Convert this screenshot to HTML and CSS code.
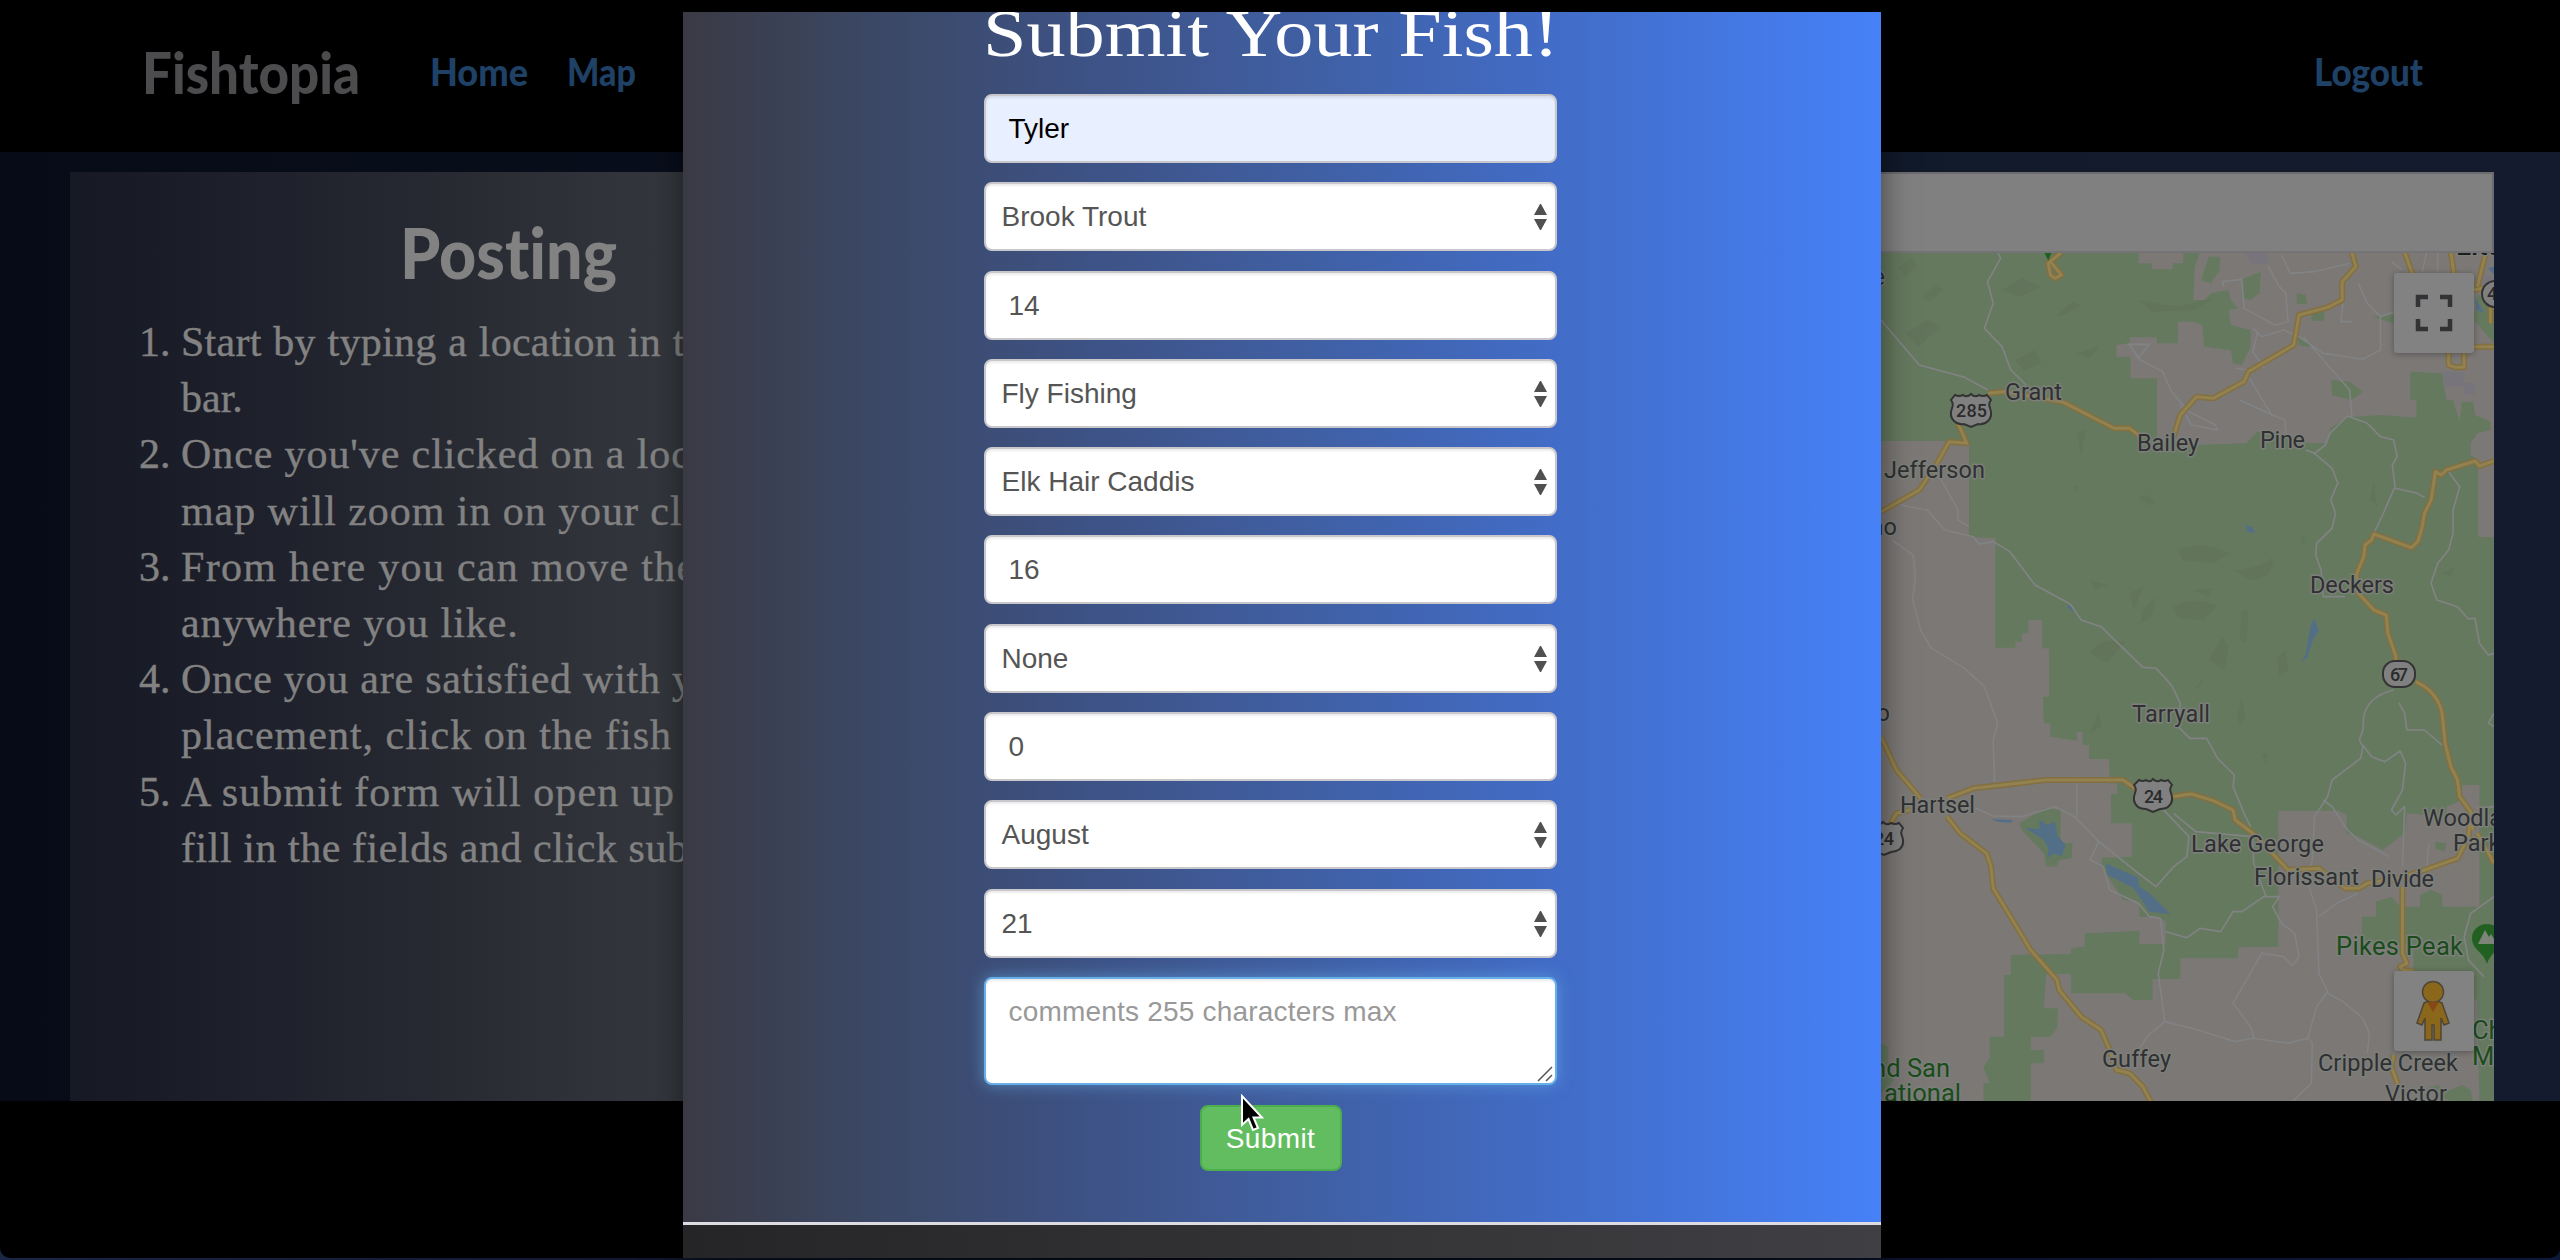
FILE: index.html
```html
<!DOCTYPE html>
<html lang="en">
<head>
<meta charset="utf-8">
<title>Fishtopia</title>
<link rel="stylesheet" href="styles.css">
</head>
<body>
<div class="window">
  <nav class="navbar">
    <svg class="brand" width="220" height="80"><text x="-1" y="55" textLength="218" lengthAdjust="spacingAndGlyphs">Fishtopia</text></svg>
    <div class="links">
      <svg width="100" height="60"><text x="-1" y="42" textLength="98" lengthAdjust="spacingAndGlyphs">Home</text></svg>
      <svg width="70" height="60"><text x="-1" y="42" textLength="69" lengthAdjust="spacingAndGlyphs">Map</text></svg>
    </div>
    <div class="links logout">
      <svg width="110" height="60"><text x="-1" y="42" textLength="109" lengthAdjust="spacingAndGlyphs">Logout</text></svg>
    </div>
  </nav>

  <main class="content">
    <section class="guide">
      <h2><svg width="220" height="100"><text x="0" y="67" textLength="217" lengthAdjust="spacingAndGlyphs">Posting</text></svg></h2>
      <ol>
        <li><span class="l1">Start by typing a location in the</span><br>bar.</li>
        <li><span class="l2">Once you've clicked on a location</span><br><span class="l3">map will zoom in on your click</span></li>
        <li><span class="l4">From here you can move the</span><br><span class="l5">anywhere you like.</span></li>
        <li><span class="l6">Once you are satisfied with your</span><br><span class="l7">placement, click on the fish</span></li>
        <li><span class="l8">A submit form will open up</span><br><span class="l9">fill in the fields and click submit</span></li>
      </ol>
    </section>

    <section class="finder">
      <div class="search"></div>
      <svg class="map" width="613" height="848" viewBox="1881 253 613 848">
        <defs>
          <g id="roads">
            <path d="M1095 757 1104 800 1073 845V900L1040 922 975 945 963 1035 860 1115 850 1145 780 1195 742 1190 705 1245 690 1310"/>
            <path d="M268 1180 305 1175 370 1190 440 1207 555 1285H590L620 1315M200 1270 220 1330 180 1325 150 1395 112 1470 25 1535"/>
            <path d="M435 757 405 790 410 825 420 835 435 825 410 785"/>
            <path d="M1215 757 1235 830M1320 757 1330 850M1400 757 1380 860M1370 870 1418 860M1370 1040H1418M1315 1060V1095L1330 1102H1350V1060M1410 900V970"/>
            <path d="M1418 1383 1385 1398 1375 1383 1310 1410 1298 1425 1285 1415 1275 1500 1260 1540 1255 1580 1245 1625 1230 1643 1145 1602 1140 1620 1125 1635 1122 1670 1105 1725 1110 1780 1145 1830 1173 1845 1177 1900 1195 1970V1990M1240 2045Q1290 2075 1300 2140L1307 2230 1320 2300 1335 2340 1340 2390 1365 2435 1370 2490"/>
            <path d="M25 2210 60 2310 115 2395M175 2395 235 2365 400 2340H575L605 2368M685 2390 730 2382 780 2402 825 2430 830 2460 875 2505 950 2610 1020 2605 1080 2665H1110L1130 2650 1200 2635 1260 2610 1335 2575 1360 2510 1365 2450M1380 2500 1418 2590M1210 2660V2860L1220 2890 1205 2900 1210 2910 1235 2913M1190 3165 1185 3200 1200 3255M45 2475 60 2440 90 2430"/>
            <path d="M175 2450 205 2500 265 2560 275 2600 280 2665 365 2850 425 2940 430 2970 480 3050 525 3090 545 3150 560 3210 590 3220 620 3260 640 3310"/>
          </g>
        </defs>
        <rect class="land" x="1881" y="253" width="613" height="848"/>
        <g transform="translate(1870 0) scale(.44005 .33333)">
          <g class="forest">
            <path d="M25 757H610V790H640V808H688V790H712V757H750L738 800 735 900 760 900 775 880 815 870 820 900 835 925 815 930 820 975 865 990V1040L845 1095 825 1090 820 1050 760 1040 755 975 735 965H700V1030H652V1012H590V1030L560 1035V1070H592V1135H652V1320L735 1335 855 1330 880 1295 1000 1330H1040L1045 1285 1085 1252 1165 1245 1242 1253V1200H1228V1115L1300 1120 1310 1200H1325L1340 1265 1345 1205H1370L1375 1245 1410 1265V1290L1380 1300 1365 1330V1365L1382 1380V1610L1418 1612V2720H1385V2355H1345V2400L1310 2420V2450L1220 2440 1215 2500 1165 2550 1110 2510 1083 2500V2445L1065 2432H928V2840L838 2842 835 2875H705V2937H642V3000H598L580 2980H457V2922H400L395 3025H427L425 3085 410 3110H365V3150H395V3190H365V3305H258V3250H272L258 3200 272 3175V3110H305V2925H320V2865L457 2862V2845L488 2840V2800L612 2793V2832H672V2765L655 2750H612V2705L575 2700 527 2600V2573L595 2570V2470H548V2382H562V2350H545L543 2277H498V2235H483V2195H470V2222L410 2210V2170H395L393 2090H407V1945H391V1860H360V1900H345V1925H330V1943H285V1615L225 1610V1323H25Z"/>
            <path d="M340 2470 395 2425 433 2430V2530H460L458 2575 430 2580 425 2600 400 2598 395 2560 345 2490ZM1118 2830V2750H1150V2705L1185 2690 1205 2720H1250V2685L1275 2670 1300 2685V2720H1418V3305H1385L1380 3000 1235 2920V2830ZM1265 3265 1290 3255 1310 3275 1345 3255 1365 3270 1370 3305H1320ZM770 770H795V810L775 850 752 840ZM845 838 888 815 885 880 865 900 845 895ZM970 880 990 885 993 912H970ZM1003 935H1032V962H1003ZM1142 950 1190 945V970ZM1048 1140 1090 1145 1120 1175 1095 1200 1050 1185ZM25 3130 42 3140 40 3180 55 3240 25 3280ZM1372 960 1418 1030V930L1380 880ZM970 1010 1000 1025 1003 1042 975 1035ZM1285 2525 1310 2530 1305 2555 1285 2545Z"/>
          </g>
          <g class="relief">
            <path d="M65 800 95 770 105 795 80 830ZM120 890 150 850 165 870 135 905ZM300 870 345 835 390 860 340 890ZM420 950 460 905 480 915 440 945ZM80 1000 130 960 160 980 110 1040ZM330 1080 375 1050 390 1090 350 1110ZM470 1060 520 1040 500 1075ZM610 900 700 920 780 895 740 930 640 935ZM830 1710Q900 1700 915 1670 920 1740 860 1740ZM700 1650Q750 1620 820 1660L780 1690 710 1680ZM610 1490 630 1485 650 1510 630 1515ZM500 1740 540 1755 510 1768ZM730 1770 780 1765 770 1790ZM690 1820Q730 1790 790 1815L760 1860 700 1855ZM845 1830 860 1830 855 1930 840 1920ZM500 1960Q520 1910 580 1925L540 1990ZM770 1980 800 1910 815 1940 805 2010ZM735 2070 760 2030 750 2060ZM835 2150 845 2090 852 2150 840 2180ZM500 2200 520 2130 525 2180ZM1135 1500 1145 1450 1152 1520ZM978 1630 985 1600 990 1630ZM890 2260 905 2260 898 2290ZM925 1970 945 1950 950 2010 930 2030ZM1300 1720 1330 1700 1320 1730Z"/>
            <path d="M620 1830 650 1790 640 1850 615 1870ZM590 1780 620 1760 600 1830ZM470 1300 490 1290 480 1370ZM460 1460 475 1455 468 1470Z"/>
          </g>
          <g class="urban">
            <path d="M850 757H900L905 790 870 795ZM1350 820 1418 830V865L1350 860ZM1300 1115H1350V1160H1310ZM1350 1150H1375V1185H1350Z"/>
          </g>
          <g class="water">
            <path d="M352 2483 385 2488V2460L403 2475 420 2465 427 2510 445 2535 435 2570 418 2560 403 2575 405 2545 395 2520ZM275 2458 325 2460 320 2468 290 2465ZM535 2590 608 2632 612 2660 635 2680 682 2742 635 2735 600 2665 540 2625ZM998 1900 1003 1870 1010 1855 1020 1893 1008 1915 993 1975 980 1982 990 1965ZM853 1573 870 1583 875 1598 858 1595ZM445 1818 457 1818 467 1840ZM1375 895 1397 940 1378 930ZM1405 805 1418 800V825Z"/>
          </g>
          <g class="minor">
            <path d="M290 757 297 775 267 845 280 910 260 985 300 1040 320 1110 355 1155M25 960 112 1095 215 1132 268 1170M585 1033H635L610 1075 590 1035 615 1080 665 1115 685 1175 725 1235 785 1275 790 1290 730 1275 705 1215"/>
            <path d="M805 860 800 845 845 838 850 925 920 975 950 965 945 880 930 860 905 800M870 985 890 1010 940 990 975 1010 1030 1060 1120 1078 1160 1050V950L1190 935M880 1000 870 1055 895 1100 860 1110 830 1105M860 1130 915 1250M985 1010 1050 1110 1090 1170 1095 1250M1110 850 1130 910 1160 950M935 765 955 820 1010 815 1090 790M1075 910 1070 965H1095M1265 757 1255 815M1290 757V815M1185 785 1210 810"/>
            <path d="M945 1300 943 1260 915 1245 840 1200M990 1350 1010 1360 1050 1405 1063 1450 1047 1500 1058 1540 1050 1585 1015 1630 1013 1665 1025 1710 1030 1790 1080 1790M1010 1360 1035 1335 1045 1300 1085 1248 1130 1270 1160 1310 1190 1320 1198 1370 1187 1395 1193 1460 1165 1545 1145 1600M1193 1465 1240 1478 1260 1492M1315 1415 1340 1460 1325 1530V1600L1315 1650 1290 1690 1275 1750 1288 1800 1335 1820 1360 1857 1375 1855 1385 1930 1405 1965 1418 1960"/>
            <path d="M70 1515 130 1530 170 1590 235 1610 248 1632 280 1625 318 1655 375 1755 455 1812 480 1860 525 1880 620 2002 650 2005 675 2040 687 2060 705 2110 700 2180 727 2215 765 2215 790 2275 828 2325 825 2360 850 2440 865 2480M160 1435 200 1530V1560L225 1580M50 1620 98 1665 103 1730 97 1800 115 1890 140 1945 215 2005 260 2060 290 2170 280 2220 283 2345M470 2345V2450"/>
            <path d="M1190 2070Q1130 2090 1122 2150L1120 2190 1112 2220 1120 2240 1115 2275 1050 2340 1040 2390 1010 2450 1005 2580 995 2650 1015 2730 1020 2920 1040 2975 1015 3020 995 3115 1005 3130 1003 3250 960 3305M1120 2235 1140 2270 1170 2285 1205 2253 1217 2290 1210 2370 1185 2430 1195 2445 1215 2420 1210 2600M1202 2108 1215 2140 1220 2190 1260 2190 1300 2235M1030 2400 1050 2420 1085 2490 1110 2520 1180 2570M1418 2140 1405 2170 1418 2180"/>
            <path d="M240 2425 280 2448 345 2450 420 2420 465 2450 520 2525 500 2580 530 2600 545 2670 610 2710 635 2750 660 2755 668 2850 655 2920 670 3065 630 3110 610 3150M520 2525 600 2610 650 2660 690 2600 720 2570 725 2510 660 2420M690 2440 740 2495 870 2510 872 2590 900 2690H930L915 2720 935 2770 965 2800 975 2870 960 2897 940 2870 890 2860 825 3010 865 3080 873 3115M930 2690 895 2690 845 2735 825 2735 797 2795 750 2785 720 2813 672 2795M670 3065 740 3088 830 3125 870 3115 950 3130 995 3115M1040 2980 1075 3005 1120 3055 1135 3100 1130 3160M1020 2750 1060 2710 1110 2680M1418 2690 1365 2740 1350 2810 1360 2880 1395 2930M1270 2530 1265 2610M1418 2420 1380 2425"/>
          </g>
          <use href="#roads" class="road-edge"/>
          <use href="#roads" class="road-core"/>
          <path class="pine" d="M396 757H413L405 782Z"/>
        </g>

        <g class="shields">
          <path d="M1955 395q4 2 8 0 4 3 8-1 4 4 8 1 4 2 8 0l4 5q-3 4-1 8 3 8-2 13-4 4-10 3l-7 3-7-3q-6 1-10-3-5-5-2-13 2-4-1-8Z"/>
          <path d="M2139 780q4 2 7 0 4 3 7-1 4 4 8 1 4 2 7 0l4 5q-3 4-1 8 3 8-2 13-3 3-9 3l-7 3-7-3q-6 0-9-3-5-5-2-13 2-4-1-8Z"/>
          <path d="M1867 823q4 2 8 0 4 3 8-1 4 4 8 1 4 2 8 0l4 5q-3 4-1 8 3 8-2 13-4 3-9 3l-7 3-7-3q-6 0-9-3-5-5-2-13 2-4-1-8Z"/>
          <rect x="2383" y="661" width="32" height="26" rx="12"/>
          <rect x="2482" y="281" width="34" height="26" rx="13"/>
          <text x="1956" y="417" textLength="31">285</text>
          <text x="2144" y="803" textLength="19">24</text>
          <text x="1874" y="845" textLength="20">24</text>
          <text x="2390" y="681" textLength="18">67</text>
          <text x="2487" y="300">470</text>
        </g>
        <g class="places">
          <text x="2005" y="400" textLength="57">Grant</text>
          <text x="2137" y="451" textLength="62">Bailey</text>
          <text x="2260" y="448" textLength="45">Pine</text>
          <text x="1884" y="478" textLength="101">Jefferson</text>
          <text x="1885" y="285" text-anchor="end">e</text>
          <text x="1897" y="535" text-anchor="end">no</text>
          <text x="1890" y="721" text-anchor="end">o</text>
          <text x="2310" y="593" textLength="84">Deckers</text>
          <text x="2132" y="722" textLength="78">Tarryall</text>
          <text x="1900" y="813" textLength="75">Hartsel</text>
          <text x="2423" y="826">Woodland</text>
          <text x="2453" y="851">Park</text>
          <text x="2191" y="852" textLength="133">Lake George</text>
          <text x="2254" y="885" textLength="105">Florissant</text>
          <text x="2371" y="887" textLength="63">Divide</text>
          <text x="2102" y="1067" textLength="69">Guffey</text>
          <text x="2318" y="1071" textLength="140">Cripple Creek</text>
          <text x="2385" y="1102" textLength="62">Victor</text>
          <text class="city" x="2456" y="255">Littleton</text>
        </g>
        <g class="places parks">
          <text x="2336" y="955" textLength="127">Pikes Peak</text>
          <text x="1950" y="1077" text-anchor="end">nd San</text>
          <text x="1961" y="1102" text-anchor="end">ational</text>
          <text x="2472" y="1039">Ch</text>
          <text x="2472" y="1065">M</text>
        </g>
        <path class="pine" d="M2487 964C2484 952 2472 950 2472 938a15 14 0 0 1 30 0C2502 950 2490 952 2487 964Z"/>
        <path class="peak" d="M2478 944 2485 930 2489 937 2491 934 2497 944Z"/>

        <g class="control"><rect x="2394" y="273" width="80" height="80" rx="3"/><rect x="2394" y="971" width="80" height="80" rx="3"/></g>
        <path class="corners" d="M2418 307V297H2428M2440 297H2450V307M2450 319V329H2440M2428 329H2418V319"/>
        <g class="pegman">
          <path d="M2424 1003Q2433 998 2442 1003L2449 1023 2444 1025 2441 1018V1040H2434V1025H2432V1040H2425V1018L2422 1025 2417 1023Z"/>
          <circle cx="2433" cy="992" r="10.500"/>
        </g>
        <path class="scarf" d="M2427 1002H2439L2433 1012Z"/>
      </svg>
    </section>
  </main>
</div>

<div class="modal">
  <form class="modal-body">
    <svg class="title" width="576" height="82" viewBox="984 12 576 82"><text x="983" y="56" textLength="576" lengthAdjust="spacingAndGlyphs">Submit Your Fish!</text></svg>
    <div class="field autofill">Tyler</div>
    <div class="field select">Brook Trout<span class="arrows"></span></div>
    <div class="field">14</div>
    <div class="field select">Fly Fishing<span class="arrows"></span></div>
    <div class="field select">Elk Hair Caddis<span class="arrows"></span></div>
    <div class="field">16</div>
    <div class="field select">None<span class="arrows"></span></div>
    <div class="field">0</div>
    <div class="field select">August<span class="arrows"></span></div>
    <div class="field select">21<span class="arrows"></span></div>
    <div class="field comments">comments 255 characters max
      <svg class="grip" width="18" height="18"><path d="M1 16 15 2M9 16 15 10"/></svg>
    </div>
    <div class="submit">Submit</div>
  </form>
  <div class="modal-footer"></div>
</div>
<svg class="cursor" width="28" height="42" viewBox="0 0 28 42"><path d="M2 2V31L8.500 25 13 36 18 34 13.500 23.500H22Z"/></svg>
</body>
</html>
```
FILE: styles.css
```css
* { box-sizing: border-box; }
body {
  margin: 0;
  width: 2560px;
  height: 1260px;
  overflow: hidden;
  position: relative;
  background: linear-gradient(90deg, #1b2844, #050a1c 45%, #0c1936);
  font-family: "Liberation Sans", sans-serif;
}
svg { display: block; }

.window {
  height: 1258px;
  padding-top: 12px;
  background: #000;
  border-radius: 0 0 10px 10px;
  overflow: hidden;
}
.navbar {
  height: 140px;
  display: flex;
  align-items: flex-start;
  padding: 27px 135px 0 143px;
  font-family: Lato, sans-serif;
  font-weight: 900;
  font-variant-ligatures: none;
}
.navbar svg, .guide h2 svg, .title { overflow: visible; }
.brand { font-size: 58px; fill: #4c4b4d; }
.links {
  display: flex;
  gap: 37px;
  margin: 5px 0 0 68px;
  font-size: 38px;
  fill: #1f4166;
}
.logout { margin-left: auto; }

.content {
  height: 949px;
  display: flex;
  padding: 20px 66px 0 70px;
  background: linear-gradient(90deg, #060b17, #090e1c 30%, #111a2a 75%, #151b2e);
}
.guide {
  width: 880px;
  background: linear-gradient(90deg, #161824, #1f212c 24%, #2a2c34 47%, #34383e 70%);
  color: #828282;
  font: 42px/56.2px "Liberation Serif", serif;
}
.guide h2 {
  margin: 0;
  height: 142px;
  padding-top: 40px;
  display: flex;
  justify-content: center;
  font: 900 71px Lato, sans-serif;
  font-variant-ligatures: none;
  fill: #828282;
}
.guide ol {
  margin: 0;
  padding-left: 111px;
  white-space: nowrap;
  -webkit-text-stroke: .4px #828282;
}
.l1 { letter-spacing: .25px; word-spacing: 1px; }
.l2 { letter-spacing: .9px; }
.l3 { letter-spacing: .95px; }
.l4 { letter-spacing: 1.3px; }
.l5 { letter-spacing: .95px; }
.l6 { letter-spacing: .75px; }
.l7 { letter-spacing: 1px; }
.l8 { letter-spacing: 1.1px; }
.l9 { letter-spacing: .55px; }

.finder { flex: 1; display: flex; flex-direction: column; }
.search {
  height: 81px;
  background: #808080;
  border: 2px solid #6b6b70;
  border-bottom-color: #747477;
}
.map { align-self: flex-end; font-family: Roboto, sans-serif; }
.land { fill: #7b7876; }
.forest { fill: #65795f; }
.relief { fill: #5e6f55; opacity: .4; }
.urban { fill: #77747b; }
.water { fill: #536f88; }
.minor path, #roads path { vector-effect: non-scaling-stroke; }
.minor { fill: none; stroke: #828385; stroke-width: 1.600px; stroke-linejoin: round; }
.road-edge { fill: none; stroke: #836f40; stroke-width: 6px; stroke-linejoin: round; }
.road-core { fill: none; stroke: #92824f; stroke-width: 3px; stroke-linejoin: round; }
.pine { fill: #226022; }
.peak { fill: #7c8578; }
.shields { fill: #808080; stroke: #333; stroke-width: 2; }
.shields text { fill: #2b2b2b; stroke: none; font-size: 18px; font-weight: 500; }
.places {
  font-size: 23.500px;
  fill: #303032;
  stroke: #7c7f7a;
  stroke-width: 3px;
  stroke-linejoin: round;
  paint-order: stroke;
}
.places .city { font-size: 28px; font-weight: 500; fill: #1c1c1c; }
.parks { font-size: 25.500px; fill: #1b4c1c; }
.control { fill: #828282; filter: drop-shadow(0 1px 3px rgba(0, 0, 0, .3)); }
.corners { fill: none; stroke: #333335; stroke-width: 4.500; }
.pegman { fill: #8a671a; stroke: #4d4637; stroke-width: 1.500; }
.scarf { fill: #864817; }

.modal {
  position: absolute;
  left: 683px;
  top: 12px;
  width: 1198px;
  height: 1246px;
  display: flex;
  flex-direction: column;
  overflow: visible;
  box-shadow: 0 10px 30px rgba(0, 0, 0, .5);
}
.modal-body {
  height: 1210px;
  display: flex;
  flex-direction: column;
  align-items: center;
  padding-right: 24px;
  background: linear-gradient(90deg, #3a3a44, #3b4763 15%, #3d5182 32%, #4060a5 53%, #426dc9 74%, #4681f8);
}
.modal-body .title {
  flex: none;
  margin-right: -4px;
  overflow: hidden;
  font: 67px "Liberation Serif", serif;
  fill: #fff;
}
.field {
  position: relative;
  flex: none;
  width: 573px;
  height: 69px;
  margin-bottom: 19.3px;
  padding-left: 23px;
  border: 2px solid #c8c8cc;
  border-radius: 8px;
  background: #fff;
  box-shadow: inset 0 2px 2px rgba(0, 0, 0, .075);
  color: #555;
  font-size: 28px;
  line-height: 65px;
}
.autofill { background: #e8effe; color: #000; }
.select { padding-left: 16px; }
.arrows { position: absolute; right: 8px; top: 20px; width: 13px; height: 26px; }
.arrows::before, .arrows::after {
  content: "";
  display: block;
  border: 6.500px solid transparent;
  border-top-width: 0;
  border-bottom: 11px solid #505050;
}
.arrows::after {
  margin-top: 4px;
  border-bottom-width: 0;
  border-top: 11px solid #505050;
}
.comments {
  height: 108px;
  border-color: #66afe9;
  box-shadow: inset 0 2px 2px rgba(0, 0, 0, .075), 0 0 16px rgba(102, 175, 233, .6);
  color: #999;
  letter-spacing: .2px;
}
.grip { position: absolute; right: 0; bottom: 0; stroke: #555; stroke-width: 1.500; }
.submit {
  width: 142px;
  height: 66px;
  margin: 1px 0 0 1px;
  border: 2px solid #4cae4c;
  border-radius: 8px;
  background: #62bd60;
  color: #fff;
  font-size: 28px;
  letter-spacing: .4px;
  line-height: 63px;
  text-align: center;
}
.modal-footer {
  flex: 1;
  border-top: 3px solid #dcdce2;
  background: linear-gradient(90deg, #252527, #303032 40%, #404044);
}
.cursor { position: absolute; left: 1240px; top: 1094px; stroke: #fff; stroke-width: 2; }
```
